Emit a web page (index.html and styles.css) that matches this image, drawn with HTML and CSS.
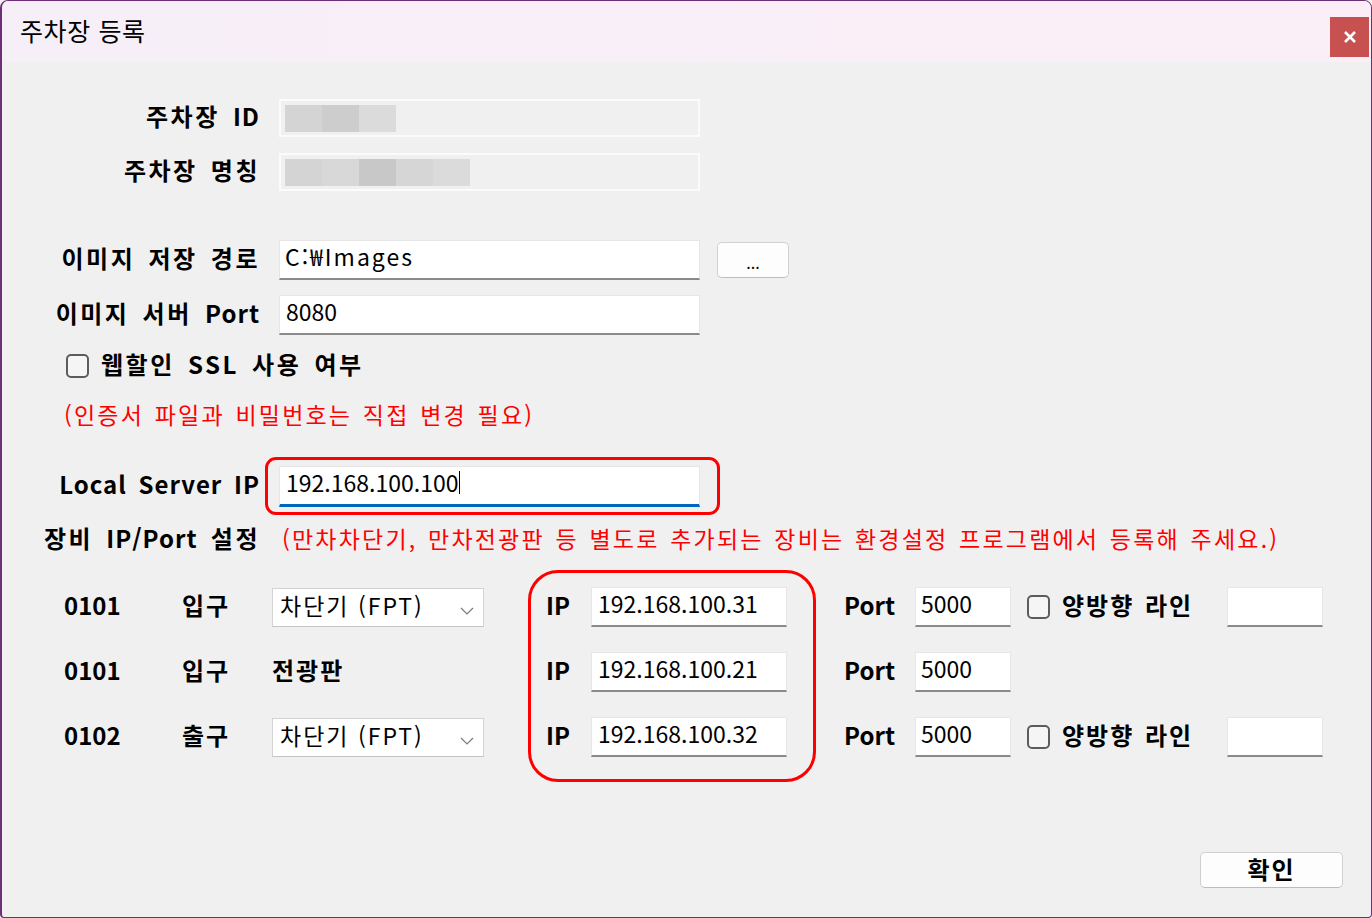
FILE: index.html
```html
<!DOCTYPE html>
<html lang="ko">
<head>
<meta charset="utf-8">
<title>주차장 등록</title>
<link rel="stylesheet" href="styles.css">
</head>
<body>
<div class="window">
  <div class="titlebar">
    <span class="title">주차장 등록</span>
    <div class="close"><svg width="14" height="14" viewBox="0 0 14 14"><path d="M2 2 L12 12 M12 2 L2 12" stroke="#fff" stroke-width="2.6" fill="none"/></svg></div>
  </div>
  <div class="content">
    <div class="row r-id">
      <div class="lbl">주차장 <span class="en">ID</span></div>
      <div class="field disabled">
        <span class="blk g1"></span><span class="blk g2"></span><span class="blk g3"></span>
      </div>
    </div>
    <div class="row r-name">
      <div class="lbl">주차장 명칭</div>
      <div class="field disabled">
        <span class="blk g1"></span><span class="blk g4"></span><span class="blk g5"></span><span class="blk g6"></span><span class="blk g3"></span>
      </div>
    </div>
    <div class="row r-path">
      <div class="lbl">이미지 저장 경로</div>
      <div class="field text path">C:₩Images</div>
      <div class="browse">...</div>
    </div>
    <div class="row r-port">
      <div class="lbl">이미지 서버 <span class="en">Port</span></div>
      <div class="field text">8080</div>
    </div>
    <div class="ssl-row">
      <span class="cb"></span>
      <span class="cb-lbl">웹할인 SSL 사용 여부</span>
    </div>
    <div class="note">(인증서 파일과 비밀번호는 직접 변경 필요)</div>
    <div class="row r-local">
      <div class="lbl en-lbl">Local Server IP</div>
      <div class="field text focus">192.168.100.100<span class="caret"></span></div>
      <div class="mark mark-local"></div>
    </div>
    <div class="dev-head">
      <div class="lbl">장비 <span class="en">IP/Port</span> 설정</div>
      <div class="dev-note">(만차차단기, 만차전광판 등 별도로 추가되는 장비는 환경설정 프로그램에서 등록해 주세요.)</div>
    </div>
    <div class="devices">
      <div class="dev-row">
        <span class="b num">0101</span>
        <span class="b">입구</span>
        <div><div class="select">차단기 (FPT)<svg class="chev" width="14" height="8" viewBox="0 0 14 8"><path d="M1 1 L7 7 L13 1" stroke="#7a7a7a" stroke-width="1.2" fill="none"/></svg></div></div>
        <span class="b num">IP</span>
        <div><div class="field text ip">192.168.100.31</div></div>
        <span class="b num">Port</span>
        <div><div class="field text pt">5000</div></div>
        <div><span class="cb"></span></div>
        <span class="b">양방향 라인</span>
        <div><div class="field text pt"></div></div>
      </div>
      <div class="dev-row">
        <span class="b num">0101</span>
        <span class="b">입구</span>
        <span class="b">전광판</span>
        <span class="b num">IP</span>
        <div><div class="field text ip">192.168.100.21</div></div>
        <span class="b num">Port</span>
        <div><div class="field text pt">5000</div></div>
        <div></div>
        <div></div>
        <div></div>
      </div>
      <div class="dev-row">
        <span class="b num">0102</span>
        <span class="b">출구</span>
        <div><div class="select">차단기 (FPT)<svg class="chev" width="14" height="8" viewBox="0 0 14 8"><path d="M1 1 L7 7 L13 1" stroke="#7a7a7a" stroke-width="1.2" fill="none"/></svg></div></div>
        <span class="b num">IP</span>
        <div><div class="field text ip">192.168.100.32</div></div>
        <span class="b num">Port</span>
        <div><div class="field text pt">5000</div></div>
        <div><span class="cb"></span></div>
        <span class="b">양방향 라인</span>
        <div><div class="field text pt"></div></div>
      </div>
      <div class="mark mark-ip"></div>
    </div>
    <div class="footer">
      <div class="ok">확인</div>
    </div>
  </div>
</div>
</body>
</html>
```
FILE: styles.css
```css
* { box-sizing: border-box; }
html, body { margin: 0; padding: 0; }
body {
  width: 1372px;
  height: 918px;
  overflow: hidden;
  background: #f0f0f0;
  font-family: "Noto Sans CJK KR", "Noto Sans", sans-serif;
  color: #000;
}
.window {
  width: 1372px;
  height: 918px;
  border: 1px solid #6d2f78;
  border-left-width: 2px;
  border-radius: 8px 8px 4px 4px;
  background: #f0f0f0;
  overflow: hidden;
  display: flex;
  flex-direction: column;
}
.titlebar {
  flex: none;
  height: 61px;
  background: linear-gradient(90deg, #f6eff8, #fbeef6);
  display: flex;
  align-items: center;
  padding-left: 18px;
}
.title {
  font-size: 25px;
  line-height: 1;
  letter-spacing: 0.6px;
  word-spacing: 0;
  margin-top: -2px;
}
.close {
  margin-left: auto;
  margin-right: 2px;
  align-self: flex-start;
  margin-top: 16px;
  width: 39px;
  height: 40px;
  background: #c75050;
  display: flex;
  align-items: center;
  justify-content: center;
}
.content { flex: 1; padding-top: 37px; }

.row { display: flex; align-items: center; }
.lbl {
  width: 258px;
  flex: none;
  text-align: right;
  font-size: 24px;
  font-weight: 700;
  letter-spacing: 2.5px;
  word-spacing: 4px;
  line-height: 30px;
  padding-bottom: 5px;
  white-space: nowrap;
}
.lbl .en { letter-spacing: 1px; }
.lbl.en-lbl { letter-spacing: 1px; word-spacing: 4px; }
.field {
  flex: none;
  width: 421px;
  margin-left: 19px;
  font-size: 23px;
  line-height: 1;
  padding-left: 6px;
  display: flex;
  align-items: center;
  white-space: nowrap;
}
.field.disabled {
  height: 38px;
  background: #f0f0f0;
  border: 2px solid #fbfbfb;
  padding-left: 4px;
}
.blk { display: block; height: 27px; }
.g1 { width: 37px; background: #d4d4d4; }
.g2 { width: 37px; background: #cdcdcd; }
.g3 { width: 37px; background: #dbdbdb; }
.g4 { width: 37px; background: #d8d8d8; }
.g5 { width: 37px; background: #c8c8c8; }
.g6 { width: 37px; background: #d6d6d6; }
.field.text {
  height: 40px;
  background: #fff;
  border: 1px solid #e6e6e6;
  border-bottom: 2px solid #8a8a8a;
  padding-bottom: 6px;
}
.field.path { letter-spacing: 2px; padding-left: 5px; }
.r-name { margin-top: 16px; }
.r-path { margin-top: 49px; }
.r-port { margin-top: 15px; }
.browse {
  margin-left: 17px;
  width: 72px;
  height: 36px;
  background: #fdfdfd;
  border: 1px solid #d0d0d0;
  border-bottom-color: #bdbdbd;
  border-radius: 5px;
  font-size: 16px;
  display: flex;
  align-items: center;
  justify-content: center;
  padding-top: 4px;
}
.ssl-row {
  margin-top: 16px;
  height: 30px;
  display: flex;
  align-items: center;
  padding-left: 64px;
}
.cb {
  display: block;
  width: 23px;
  height: 24px;
  border: 2px solid #5c5c5c;
  border-radius: 5px;
  background: #f5f5f5;
}
.cb-lbl {
  margin-left: 12px;
  font-size: 24px;
  font-weight: 700;
  letter-spacing: 2.5px;
  word-spacing: 4px;
  padding-bottom: 5px;
}
.note {
  margin-top: 18px;
  height: 30px;
  line-height: 30px;
  padding-left: 62px;
  color: #f00;
  font-size: 23px;
  word-spacing: 2px;
  letter-spacing: 2.2px;
}
.r-local { margin-top: 37px; position: relative; }
.field.focus {
  height: 41px;
  border-bottom: 3px solid #0067c0;
}
.caret {
  display: inline-block;
  width: 1px;
  height: 23px;
  background: #000;
  margin-left: 1px;
}
.mark {
  position: absolute;
  border: 3px solid #f00;
  pointer-events: none;
}
.mark-local {
  left: 263px;
  top: -9px;
  width: 455px;
  height: 58px;
  border-radius: 11px;
}
.dev-head {
  margin-top: 18px;
  display: flex;
  align-items: center;
  height: 30px;
}
.dev-note {
  margin-left: 22px;
  color: #f00;
  font-size: 23px;
  word-spacing: 2px;
  letter-spacing: 2.2px;
  white-space: nowrap;
  padding-bottom: 4px;
}
.devices {
  position: relative;
  margin-top: 32px;
  padding-left: 62px;
  display: grid;
  row-gap: 25px;
}
.dev-row {
  display: grid;
  grid-template-columns: 118px 90px 274px 45px 253px 71px 112px 35px 165px 96px;
  height: 40px;
  align-items: center;
}
.b {
  font-size: 24px;
  font-weight: 700;
  letter-spacing: 2px;
  word-spacing: 2px;
  white-space: nowrap;
  padding-bottom: 5px;
}
.b.num { letter-spacing: 0; }
.select {
  width: 212px;
  height: 39px;
  background: #fff;
  border: 1px solid #d3d3d3;
  border-bottom-color: #c4c4c4;
  font-size: 23px;
  letter-spacing: 2px;
  padding-left: 7px;
  padding-bottom: 4px;
  display: flex;
  align-items: center;
  position: relative;
}
.chev { position: absolute; right: 9px; top: 18px; }
.field.ip { width: 196px; margin-left: 0; }
.field.pt { width: 96px; margin-left: 0; padding-left: 5px; }
.mark-ip {
  left: 526px;
  top: -17px;
  width: 288px;
  height: 212px;
  border-radius: 30px;
}
.footer {
  margin-top: 95px;
  display: flex;
  justify-content: flex-end;
  padding-right: 28px;
}
.ok {
  width: 143px;
  height: 36px;
  background: #fdfdfd;
  border: 1px solid #d0d0d0;
  border-bottom-color: #bcbcbc;
  border-radius: 5px;
  font-size: 24px;
  font-weight: 700;
  letter-spacing: 2px;
  display: flex;
  align-items: center;
  justify-content: center;
  line-height: 1;
  padding-bottom: 3px;
}
```
